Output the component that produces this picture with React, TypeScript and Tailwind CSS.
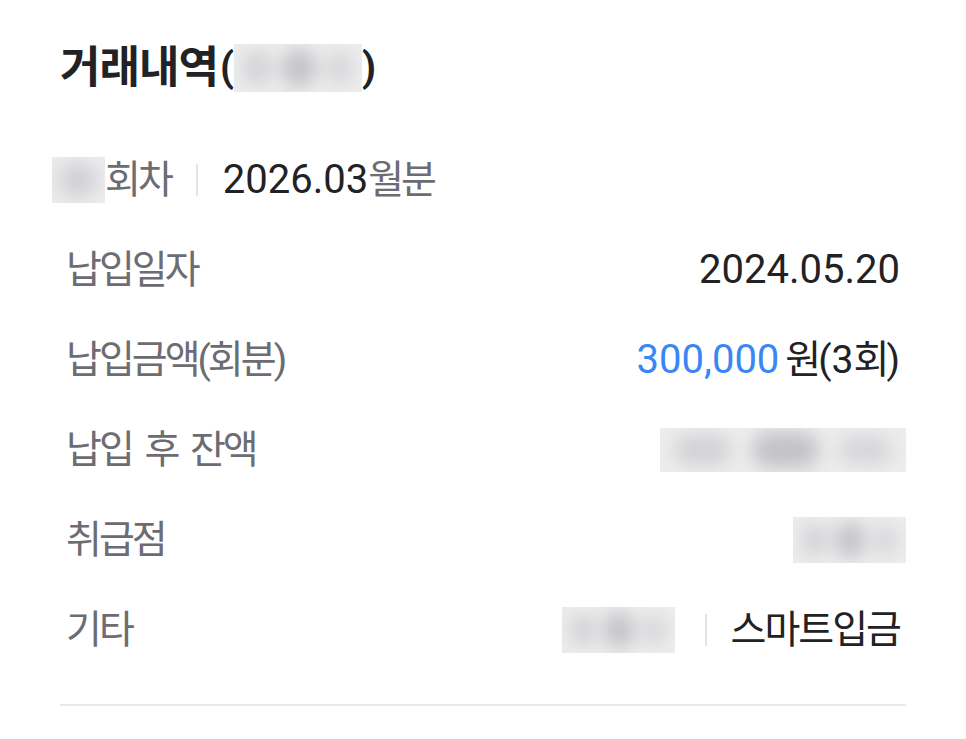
import React from 'react'

const font = { fontFamily: 'Roboto, "Noto Sans CJK KR", sans-serif' }

// blurred placeholder for masked values
function Masked({ w, h, className = '' }: { w: string; h: string; className?: string }) {
  return (
    <div className={`relative overflow-hidden bg-[#ededee] ${w} ${h} ${className}`}>
      <div className="absolute inset-0 flex items-center justify-around px-1 blur-[9px]">
        <span className="h-[70%] w-[24%] rounded-full bg-[#d2d2d5]" />
        <span className="h-[80%] w-[28%] rounded-full bg-[#c3c3c7]" />
        <span className="h-[65%] w-[22%] rounded-full bg-[#d6d6d9]" />
      </div>
    </div>
  )
}

function Label({ children, className = '' }: { children: React.ReactNode; className?: string }) {
  return (
    <span className={`text-[39px] leading-none tracking-[-3px] text-[#6c6c72] whitespace-pre ${className}`}>
      {children}
    </span>
  )
}

function Divider({ className = '' }: { className?: string }) {
  return <span className={`w-[2px] h-[32px] bg-[#e4e4e6] ${className}`} />
}

export default function App() {
  return (
    <div className="w-[966px] h-[739px] bg-white px-[60px] pt-[40px]" style={font}>
      {/* Title */}
      <div className="h-[56px] flex items-center text-[#222224]">
        <span className="text-[44px] font-bold leading-none tracking-[-1px]">거래내역</span>
        <span className="text-[40px] font-bold leading-none ml-[2px]">(</span>
        <Masked w="w-[128px]" h="h-[48px]" />
        <span className="text-[40px] font-bold leading-none">)</span>
      </div>

      {/* Round / month */}
      <div className="mt-[39px] h-[90px] flex items-center -ml-[8px]">
        <Masked w="w-[53px]" h="h-[46px]" />
        <Label>회차</Label>
        <Divider className="ml-[25px] mr-[25px]" />
        <span className="text-[40px] leading-none text-[#222224]">2026.03</span>
        <Label>월분</Label>
      </div>

      <div className="h-[90px] flex items-center justify-between pl-[6px]">
        <Label>납입일자</Label>
        <span className="text-[40px] leading-none text-[#222224] mr-[6px]">2024.05.20</span>
      </div>

      <div className="h-[90px] flex items-center justify-between pl-[6px]">
        <Label className="tracking-[-2.5px]">납입금액(회분)</Label>
        <span className="flex items-center leading-none mr-[6px]">
          <span className="text-[40px] text-[#3a86f2]">300,000</span>
          <span className="text-[39px] tracking-[-3px] text-[#222224] ml-[6px]">원</span>
          <span className="text-[39px] text-[#222224]">(3</span>
          <span className="text-[39px] tracking-[-3px] text-[#222224]">회</span>
          <span className="text-[39px] text-[#222224]">)</span>
        </span>
      </div>

      <div className="h-[90px] flex items-center justify-between pl-[6px]">
        <Label className="[word-spacing:6px]">납입 후 잔액</Label>
        <Masked w="w-[246px]" h="h-[44px]" />
      </div>

      <div className="h-[90px] flex items-center justify-between pl-[6px]">
        <Label>취급점</Label>
        <Masked w="w-[113px]" h="h-[46px]" />
      </div>

      <div className="h-[90px] flex items-center justify-between pl-[6px]">
        <Label>기타</Label>
        <span className="flex items-center mr-[6px]">
          <Masked w="w-[113px]" h="h-[46px]" />
          <Divider className="ml-[30px] mr-[24px]" />
          <span className="text-[39px] leading-none tracking-[-2px] text-[#222224]">스마트입금</span>
        </span>
      </div>

      <div className="mt-[29px] h-[2px] bg-[#e9e9eb]" />
    </div>
  )
}
